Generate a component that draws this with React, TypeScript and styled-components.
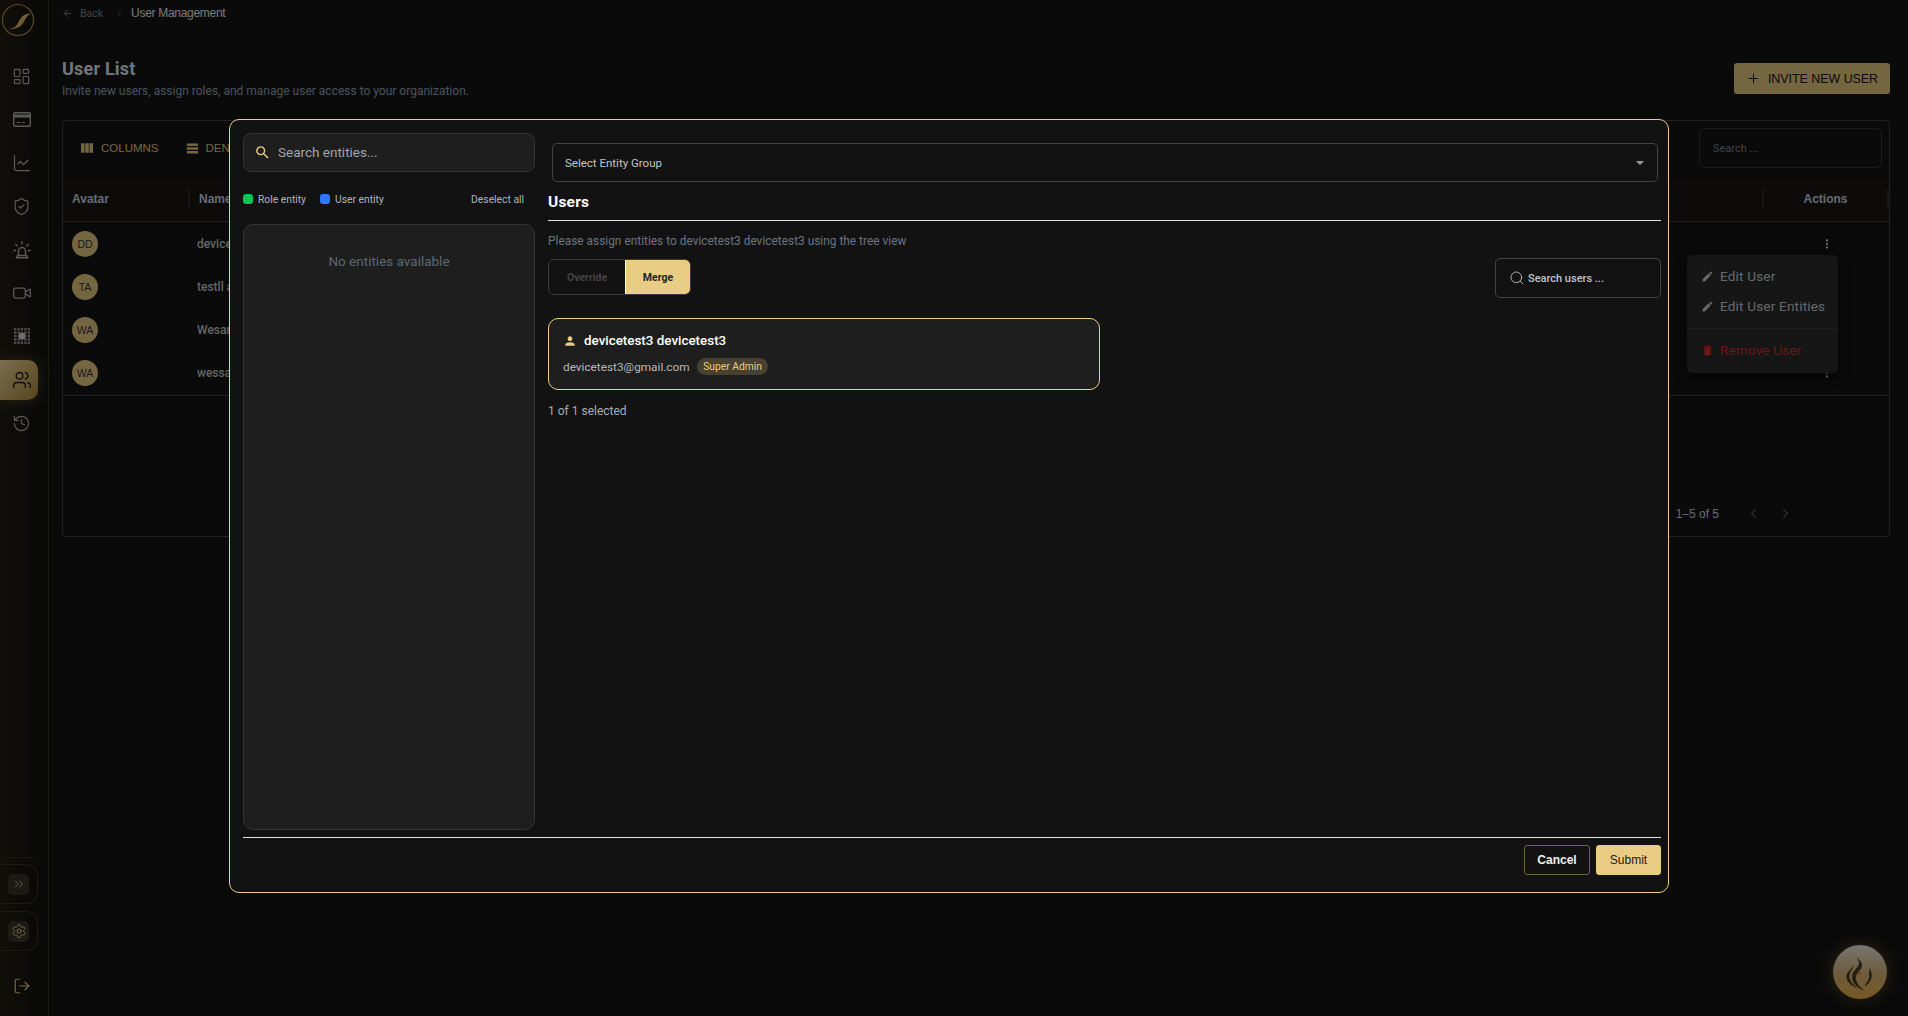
import React from "react";
import styled, { createGlobalStyle } from "styled-components";
import {
  ArrowLeft,
  ChevronLeft,
  ChevronRight,
  ChevronsRight,
  History,
  LayoutDashboard,
  LineChart,
  LogOut,
  Plus,
  Search,
  Settings,
  ShieldCheck,
  Users as UsersIcon,
  Video,
} from "lucide-react";
import { MdDelete, MdEdit, MdMoreVert, MdPerson, MdSearch, MdTableRows, MdViewColumn } from "react-icons/md";

const GOLD = "#eacd85";
const FONT = `Roboto, "Liberation Sans", Arial, sans-serif`;
const ARIAL = `"Liberation Sans", Arial, sans-serif`;

const GlobalStyle = createGlobalStyle`
  * { box-sizing: border-box; }
  html, body { margin: 0; height: 100%; background: #141414; }
  body { font-family: ${FONT}; overflow: hidden; }
`;

const Page = styled.div`
  display: flex;
  width: 1908px;
  height: 1016px;
  background: #141414;
  overflow: hidden;
`;

/* sidebar */
const Sidebar = styled.aside`
  width: 49px;
  flex: none;
  display: flex;
  flex-direction: column;
  border-right: 1px solid #3a3420;
  background: linear-gradient(90deg, #221e14 0%, #161512 65%, #141414 100%);
`;

const LogoWrap = styled.div`
  height: 38px;
  margin-top: 1px;
`;

const NavList = styled.nav`
  display: flex;
  flex-direction: column;
  margin-top: 17px;
`;

const NavItem = styled.div<{ $active?: boolean }>`
  width: 38px;
  height: 40px;
  margin-bottom: 3.4px;
  display: flex;
  align-items: center;
  justify-content: center;
  padding-left: 5px;
  border-radius: 0 10px 10px 0;
  color: ${(p) => (p.$active ? "#1a1a1a" : "#b4b4b4")};
  background: ${(p) => (p.$active ? "linear-gradient(135deg, #f4dc9c 0%, #b08a3e 100%)" : "transparent")};
  box-shadow: ${(p) => (p.$active ? "0 0 14px rgba(200,160,80,.35)" : "none")};
  svg { display: block; }
`;

const SidebarBottom = styled.div`
  margin-top: auto;
  display: flex;
  flex-direction: column;
  gap: 7px;
`;

const BottomRule = styled.div`
  width: 30px;
  height: 1px;
  margin: 0 0 6px 4px;
  background: #3a3420;
`;

const BottomBox = styled.div`
  width: 38px;
  height: 40px;
  display: flex;
  align-items: center;
  justify-content: center;
  border: 1px solid #3a3526;
  border-left: none;
  border-radius: 0 12px 12px 0;
  color: ${GOLD};
`;

const BottomInner = styled.div`
  width: 21px;
  height: 21px;
  display: flex;
  align-items: center;
  justify-content: center;
  border-radius: 5px;
  background: #38342a;
`;

const LogoutRow = styled.div`
  height: 58px;
  padding: 19px 0 0 13px;
  color: ${GOLD};
`;

/* main page */
const Main = styled.main`
  flex: 1;
  min-width: 0;
  padding: 0 18px 0 13px;
  display: flex;
  flex-direction: column;
`;

const Breadcrumb = styled.div`
  height: 26px;
  display: flex;
  align-items: center;
  color: #8a8a8a;
  font-size: 10.5px;
`;

const BackLabel = styled.span`
  margin: 0 12px 0 7px;
`;

const Current = styled.span`
  margin-left: 7px;
  color: #f0f0f0;
  font-family: ${ARIAL};
  font-size: 12px;
  letter-spacing: -0.3px;
`;

const PageHead = styled.div`
  display: flex;
  justify-content: space-between;
  align-items: flex-start;
  height: 94px;
  padding-top: 34px;
`;

const Title = styled.h1`
  margin: 0;
  color: #e2e8f0;
  font-size: 18px;
  line-height: 18px;
  font-weight: 700;
  letter-spacing: 0.2px;
`;

const Subtitle = styled.p`
  margin: 6px 0 0;
  color: #94a3b8;
  font-size: 12px;
  line-height: 14px;
`;

const InviteButton = styled.button`
  width: 156px;
  height: 31px;
  margin-top: 3px;
  border: none;
  border-radius: 3px;
  display: flex;
  align-items: center;
  justify-content: center;
  gap: 7px;
  background: ${GOLD};
  color: #111;
  font-family: ${ARIAL};
  font-size: 12.4px;
`;

const TablePanel = styled.section`
  height: 417px;
  border: 1px solid #444;
  border-radius: 4px;
  display: flex;
  flex-direction: column;
`;

const Toolbar = styled.div`
  height: 58px;
  flex: none;
  padding: 0 7px 4px 16px;
  display: flex;
  align-items: center;
  justify-content: space-between;
`;

const ToolGroup = styled.div`
  display: flex;
  gap: 26px;
`;

const ToolButton = styled.div`
  display: flex;
  align-items: center;
  gap: 6px;
  color: ${GOLD};
  font-family: ${ARIAL};
  font-size: 11.5px;
`;

const TableSearch = styled.div`
  width: 183px;
  height: 40px;
  padding-left: 13px;
  display: flex;
  align-items: center;
  border: 1px solid #3a3a3a;
  border-radius: 6px;
  color: #7c8796;
  font-size: 11px;
`;

const HeadRow = styled.div`
  height: 43px;
  flex: none;
  display: flex;
  align-items: center;
  padding-bottom: 3px;
  border-bottom: 1px solid #444;
  background: #1a1713;
  color: #cbd5e1;
  font-family: ${ARIAL};
  font-size: 12px;
  font-weight: 700;
`;

const Row = styled.div`
  height: 43.25px;
  flex: none;
  display: flex;
  align-items: center;
  color: #c8c8c8;
  font-size: 12px;
  font-weight: 500;
`;

const AvatarCell = styled.div`
  width: 125px;
  padding-left: 9px;
  flex: none;
  position: relative;
`;

const NameCell = styled.div`
  flex: 1;
  padding-left: 9px;
`;

const ActionsCell = styled.div<{ $head?: boolean }>`
  width: ${(p) => (p.$head ? "123px" : "124px")};
  flex: none;
  display: flex;
  justify-content: center;
  color: ${(p) => (p.$head ? "inherit" : "#cfcfcf")};
`;

const ColumnRule = styled.div`
  width: 2px;
  height: 20px;
  flex: none;
  background: #2a2a2a;
`;

const Avatar = styled.div`
  width: 26px;
  height: 26px;
  display: flex;
  align-items: center;
  justify-content: center;
  border-radius: 50%;
  background: ${GOLD};
  color: #333;
  font-family: ${ARIAL};
  font-size: 10.5px;
  font-weight: 400;
`;

const RowsBlock = styled.div`
  position: relative;
  flex: none;
  border-bottom: 1px solid #444;
`;

const ActionMenu = styled.div`
  position: absolute;
  top: 33px;
  right: 51px;
  width: 151px;
  height: 118px;
  padding-top: 6px;
  border-radius: 5px;
  background: #2c2c2c;
  box-shadow: 0 5px 12px rgba(0, 0, 0, 0.4);
  font-weight: 400;
`;

const MenuItem = styled.div<{ $danger?: boolean }>`
  height: 30px;
  padding-left: 14px;
  display: flex;
  align-items: center;
  gap: 6px;
  color: ${(p) => (p.$danger ? "#d32f2f" : "#d0d0d0")};
  font-size: 13.5px;
  letter-spacing: 0.2px;
`;

const MenuRule = styled.div`
  height: 1px;
  margin: 7px 0 6px;
  background: #3c3c3c;
`;

const Pagination = styled.div`
  margin-top: auto;
  padding: 0 96px 15px 0;
  display: flex;
  justify-content: flex-end;
  align-items: center;
  color: #cbd5e1;
  font-family: ${ARIAL};
  font-size: 12px;
`;

const PagerIcons = styled.div`
  margin-left: 27px;
  display: flex;
  gap: 17px;
  color: #5c5c5c;
`;

const FlameButton = styled.div`
  position: absolute;
  left: 1833px;
  top: 945px;
  width: 54px;
  height: 54px;
  display: flex;
  align-items: center;
  justify-content: center;
  border-radius: 50%;
  background: linear-gradient(180deg, #eeeae2 0%, #dcb878 55%, #f0b048 100%);
  box-shadow: 0 0 16px rgba(230, 170, 70, 0.35);
  color: #4a3e26;
`;

/* dialog */
const Backdrop = styled.div`
  position: fixed;
  inset: 0;
  padding: 119px 0 0 229px;
  background: rgba(0, 0, 0, 0.5);
`;

const Dialog = styled.div`
  width: 1440px;
  height: 774px;
  padding: 13px 7px 17px 13px;
  display: flex;
  flex-direction: column;
  border: 1px solid ${GOLD};
  border-radius: 10px;
  background: #121212;
  color: #fff;
`;

const DialogBody = styled.div`
  flex: 1;
  min-height: 0;
  display: flex;
  gap: 13px;
`;

const EntitiesColumn = styled.div`
  width: 292px;
  flex: none;
  display: flex;
  flex-direction: column;
`;

const EntitySearch = styled.div`
  height: 39px;
  flex: none;
  padding: 0 0 1px 10px;
  display: flex;
  align-items: center;
  gap: 7px;
  border: 1px solid #333;
  border-radius: 8px;
  background: #1e1e1e;
  color: #a4a4a8;
  font-size: 13.5px;
`;

const LegendRow = styled.div`
  height: 52px;
  flex: none;
  display: flex;
  align-items: center;
  padding: 2px 11px 0 0;
  color: #b0b4ba;
  font-size: 10.3px;
`;

const LegendDot = styled.span<{ $color: string }>`
  width: 10px;
  height: 10px;
  margin-right: 5px;
  border-radius: 3px;
  background: ${(p) => p.$color};
`;

const LegendLabel = styled.span`
  margin-right: 14px;
`;

const Deselect = styled.span`
  margin-left: auto;
`;

const EntityTree = styled.div`
  flex: 1;
  padding-top: 28px;
  border: 1px solid #333;
  border-radius: 10px;
  background: #1e1e1e;
  color: #5f6672;
  font-size: 13.5px;
  text-align: center;
`;

const UsersColumn = styled.div`
  flex: 1;
  min-width: 0;
  display: flex;
  flex-direction: column;
`;

const GroupSelect = styled.div`
  height: 39px;
  flex: none;
  margin: 10px 3px 0 4px;
  padding: 0 13px 0 12px;
  display: flex;
  align-items: center;
  justify-content: space-between;
  border: 1px solid #444;
  border-radius: 5px;
  color: #c4c4c4;
  font-size: 11.5px;
`;

const Caret = styled.span`
  width: 0;
  height: 0;
  border-left: 4px solid transparent;
  border-right: 4px solid transparent;
  border-top: 4px solid #999;
`;

const SectionTitle = styled.h2`
  height: 39px;
  margin: 0;
  padding-top: 10px;
  flex: none;
  border-bottom: 1px solid #e4e4e4;
  color: #fff;
  font-size: 15.5px;
  line-height: 20px;
  font-weight: 700;
  letter-spacing: 0.2px;
`;

const HelpText = styled.p`
  margin: 13px 0 0;
  color: #6d7480;
  font-size: 11.9px;
  line-height: 14px;
`;

const ControlsRow = styled.div`
  display: flex;
  align-items: flex-start;
  justify-content: space-between;
  margin-top: 10px;
`;

const ModeToggle = styled.div`
  width: 143px;
  height: 36px;
  margin-top: 1px;
  display: flex;
  border: 1px solid #3a3a3a;
  border-radius: 6px;
  overflow: hidden;
  font-size: 10.5px;
  font-weight: 700;
`;

const ModeOption = styled.div<{ $active?: boolean }>`
  flex: ${(p) => (p.$active ? "0 0 65px" : 1)};
  display: flex;
  align-items: center;
  justify-content: center;
  background: ${(p) => (p.$active ? GOLD : "transparent")};
  color: ${(p) => (p.$active ? "#222" : "#444")};
  border-left: ${(p) => (p.$active ? "1px solid #fff" : "none")};
`;

const UserSearch = styled.div`
  width: 166px;
  height: 40px;
  padding-left: 13px;
  display: flex;
  align-items: center;
  gap: 3px;
  border: 1px solid #444;
  border-radius: 5px;
  color: #c0c4c8;
  font-size: 11px;
  font-weight: 500;
`;

const UserCard = styled.div`
  width: 552px;
  height: 72px;
  margin-top: 20px;
  padding: 14px 13px 0 14px;
  border: 1px solid ${GOLD};
  border-radius: 10px;
  background: #1e1e1e;
`;

const CardName = styled.div`
  display: flex;
  align-items: center;
  gap: 7px;
  color: #fff;
  font-size: 13.4px;
  line-height: 16px;
  font-weight: 500;
`;

const CardMeta = styled.div`
  margin-top: 9px;
  display: flex;
  align-items: center;
  gap: 7px;
  color: #b4b8bc;
  font-size: 11.8px;
`;

const RoleChip = styled.span`
  height: 17px;
  padding: 0 6.5px;
  display: flex;
  align-items: center;
  border-radius: 9px;
  background: #484030;
  color: ${GOLD};
  font-size: 10.3px;
`;

const SelectionCount = styled.div`
  margin-top: 14px;
  color: #a8adb4;
  font-size: 12px;
  line-height: 14px;
`;

const DialogFooter = styled.div`
  height: 38px;
  flex: none;
  margin-top: 7px;
  padding-top: 7px;
  display: flex;
  justify-content: flex-end;
  gap: 6px;
  border-top: 1px solid #e4e4e4;
`;

const FooterButton = styled.button<{ $primary?: boolean }>`
  width: ${(p) => (p.$primary ? "65px" : "66px")};
  height: 30px;
  border: 1px solid ${(p) => (p.$primary ? GOLD : "#6e6340")};
  border-radius: 3px;
  background: ${(p) => (p.$primary ? GOLD : "transparent")};
  color: ${(p) => (p.$primary ? "#1a1a1a" : "#f0f0f0")};
  font-family: ${ARIAL};
  font-size: 12px;
  font-weight: ${(p) => (p.$primary ? 400 : 700)};
`;

const BrandLogo = () => (
  <svg width="36" height="38" viewBox="0 0 36 38" fill="none">
    <circle cx="18" cy="19" r="15.5" stroke="#b08c4a" strokeWidth="1.2" />
    <path d="M7 28c6 0 9-2 11.5-7S24 12 31 12.5c-3 1.5-5 4-7 8s-7 8.5-17 7.5z" fill="#e0b868" />
  </svg>
);

const CardIcon = () => (
  <svg width="18" height="15" viewBox="0 0 18 15" fill="none">
    <rect x="0.7" y="0.7" width="16.6" height="13.6" rx="1.5" stroke="currentColor" strokeWidth="1.4" />
    <rect x="1" y="2.5" width="16" height="3" fill="currentColor" />
    <path d="M3.5 10.5h3.5M8.5 10.5h3.5" stroke="currentColor" strokeWidth="1.2" />
  </svg>
);

const SirenIcon = () => (
  <svg width="20" height="20" viewBox="0 0 20 20" fill="none" stroke="currentColor" strokeWidth="1.4" strokeLinecap="round">
    <path d="M6.5 15.5V11a3.5 3.5 0 0 1 7 0v4.5" />
    <path d="M4.5 17.8c0-1.4.6-2.3 1.5-2.3h8c.9 0 1.5.9 1.5 2.3z" />
    <path d="M10 1.8v2.2M3.8 4.5l1.4 1.4M16.2 4.5l-1.4 1.4M1.8 10.5H3.6M16.4 10.5h1.8" />
  </svg>
);

const MatrixIcon = () => (
  <svg width="16" height="16" viewBox="0 0 16 16" fill="currentColor">
    {[0, 3.4, 6.8, 10.2, 13.6].map((x) =>
      [0, 3.4, 6.8, 10.2, 13.6].map((y) => <rect key={`${x}-${y}`} x={x} y={y} width="2.4" height="2.4" opacity="0.8" />)
    )}
    <rect x="5" y="5" width="6" height="6" fill="#ddd" />
  </svg>
);

const FlameIcon = () => (
  <svg width="28" height="42" viewBox="0 0 28 42" fill="currentColor">
    <path d="M10 1C8 7 17 9 16 15c-1 5-7 7-6 13 .5 5 5 9 9 12-6-2-13-7-13-14 0-7 7-9 7-14 0-4-4-6-3-11z" />
    <path d="M7.5 14C8 18 3 20 3.5 26c.5 5 4.5 8 7.5 11-5-2-11-6-10.5-12C1 20 6 18 7.5 14z" />
    <path d="M24 17c1 4 3 7 1 11-1 3-4 6-6 8 0-4 4-6 4-10 0-3 0-6 1-9z" />
    <circle cx="13.5" cy="22" r="1.7" fill="#d8962c" />
  </svg>
);

const sideIcons = [
  <LayoutDashboard size={19} strokeWidth={1.5} />,
  <CardIcon />,
  <LineChart size={20} strokeWidth={1.5} />,
  <ShieldCheck size={19} strokeWidth={1.5} />,
  <SirenIcon />,
  <Video size={20} strokeWidth={1.5} />,
  <MatrixIcon />,
];

const rows = [
  { initials: "DD", name: "devicetest3 devicetest3" },
  { initials: "TA", name: "testll abc" },
  { initials: "WA", name: "Wesam Ali" },
  { initials: "WA", name: "wessam ali" },
];

export default function App() {
  return (
    <>
      <GlobalStyle />
      <Page>
        <Sidebar>
          <LogoWrap>
            <BrandLogo />
          </LogoWrap>
          <NavList>
            {sideIcons.map((icon, i) => (
              <NavItem key={i}>{icon}</NavItem>
            ))}
            <NavItem $active>
              <UsersIcon size={20} strokeWidth={1.6} />
            </NavItem>
            <NavItem>
              <History size={19} strokeWidth={1.5} />
            </NavItem>
          </NavList>
          <SidebarBottom>
            <div>
              <BottomRule />
              <BottomBox>
                <BottomInner>
                  <ChevronsRight size={14} strokeWidth={1.5} />
                </BottomInner>
              </BottomBox>
            </div>
            <BottomBox>
              <BottomInner>
                <Settings size={16} strokeWidth={1.4} />
              </BottomInner>
            </BottomBox>
            <LogoutRow>
              <LogOut size={18} strokeWidth={1.6} />
            </LogoutRow>
          </SidebarBottom>
        </Sidebar>

        <Main>
          <Breadcrumb>
            <ArrowLeft size={11} />
            <BackLabel>Back</BackLabel>
            <ChevronRight size={9} />
            <Current>User Management</Current>
          </Breadcrumb>
          <PageHead>
            <div>
              <Title>User List</Title>
              <Subtitle>Invite new users, assign roles, and manage user access to your organization.</Subtitle>
            </div>
            <InviteButton>
              <Plus size={15} strokeWidth={1.6} />
              INVITE NEW USER
            </InviteButton>
          </PageHead>
          <TablePanel>
            <Toolbar>
              <ToolGroup>
                <ToolButton>
                  <MdViewColumn size={16} />
                  COLUMNS
                </ToolButton>
                <ToolButton>
                  <MdTableRows size={15} />
                  DENSITY
                </ToolButton>
              </ToolGroup>
              <TableSearch>Search ...</TableSearch>
            </Toolbar>
            <HeadRow>
              <AvatarCell>Avatar</AvatarCell>
              <ColumnRule />
              <NameCell>Name</NameCell>
              <ColumnRule />
              <ActionsCell $head>Actions</ActionsCell>
              <ColumnRule />
            </HeadRow>
            <RowsBlock>
              {rows.map((row) => (
                <Row key={row.name}>
                  <AvatarCell>
                    <Avatar>{row.initials}</Avatar>
                  </AvatarCell>
                  <NameCell>{row.name}</NameCell>
                  <ActionsCell>
                    <MdMoreVert size={14} />
                  </ActionsCell>
                </Row>
              ))}
              <ActionMenu>
                <MenuItem>
                  <MdEdit size={13} />
                  Edit User
                </MenuItem>
                <MenuItem>
                  <MdEdit size={13} />
                  Edit User Entities
                </MenuItem>
                <MenuRule />
                <MenuItem $danger>
                  <MdDelete size={13} />
                  Remove User
                </MenuItem>
              </ActionMenu>
            </RowsBlock>
            <Pagination>
              1–5 of 5
              <PagerIcons>
                <ChevronLeft size={15} />
                <ChevronRight size={15} />
              </PagerIcons>
            </Pagination>
          </TablePanel>
        </Main>

        <FlameButton>
          <FlameIcon />
        </FlameButton>
      </Page>

      <Backdrop>
        <Dialog>
          <DialogBody>
            <EntitiesColumn>
              <EntitySearch>
                <MdSearch size={17} color={GOLD} />
                Search entities...
              </EntitySearch>
              <LegendRow>
                <LegendDot $color="#00c853" />
                <LegendLabel>Role entity</LegendLabel>
                <LegendDot $color="#2979ff" />
                <LegendLabel>User entity</LegendLabel>
                <Deselect>Deselect all</Deselect>
              </LegendRow>
              <EntityTree>No entities available</EntityTree>
            </EntitiesColumn>
            <UsersColumn>
              <GroupSelect>
                Select Entity Group
                <Caret />
              </GroupSelect>
              <SectionTitle>Users</SectionTitle>
              <HelpText>Please assign entities to devicetest3 devicetest3 using the tree view</HelpText>
              <ControlsRow>
                <ModeToggle>
                  <ModeOption>Override</ModeOption>
                  <ModeOption $active>Merge</ModeOption>
                </ModeToggle>
                <UserSearch>
                  <Search size={16} strokeWidth={1.3} />
                  Search users ...
                </UserSearch>
              </ControlsRow>
              <UserCard>
                <CardName>
                  <MdPerson size={14} color={GOLD} />
                  devicetest3 devicetest3
                </CardName>
                <CardMeta>
                  devicetest3@gmail.com
                  <RoleChip>Super Admin</RoleChip>
                </CardMeta>
              </UserCard>
              <SelectionCount>1 of 1 selected</SelectionCount>
            </UsersColumn>
          </DialogBody>
          <DialogFooter>
            <FooterButton>Cancel</FooterButton>
            <FooterButton $primary>Submit</FooterButton>
          </DialogFooter>
        </Dialog>
      </Backdrop>
    </>
  );
}
